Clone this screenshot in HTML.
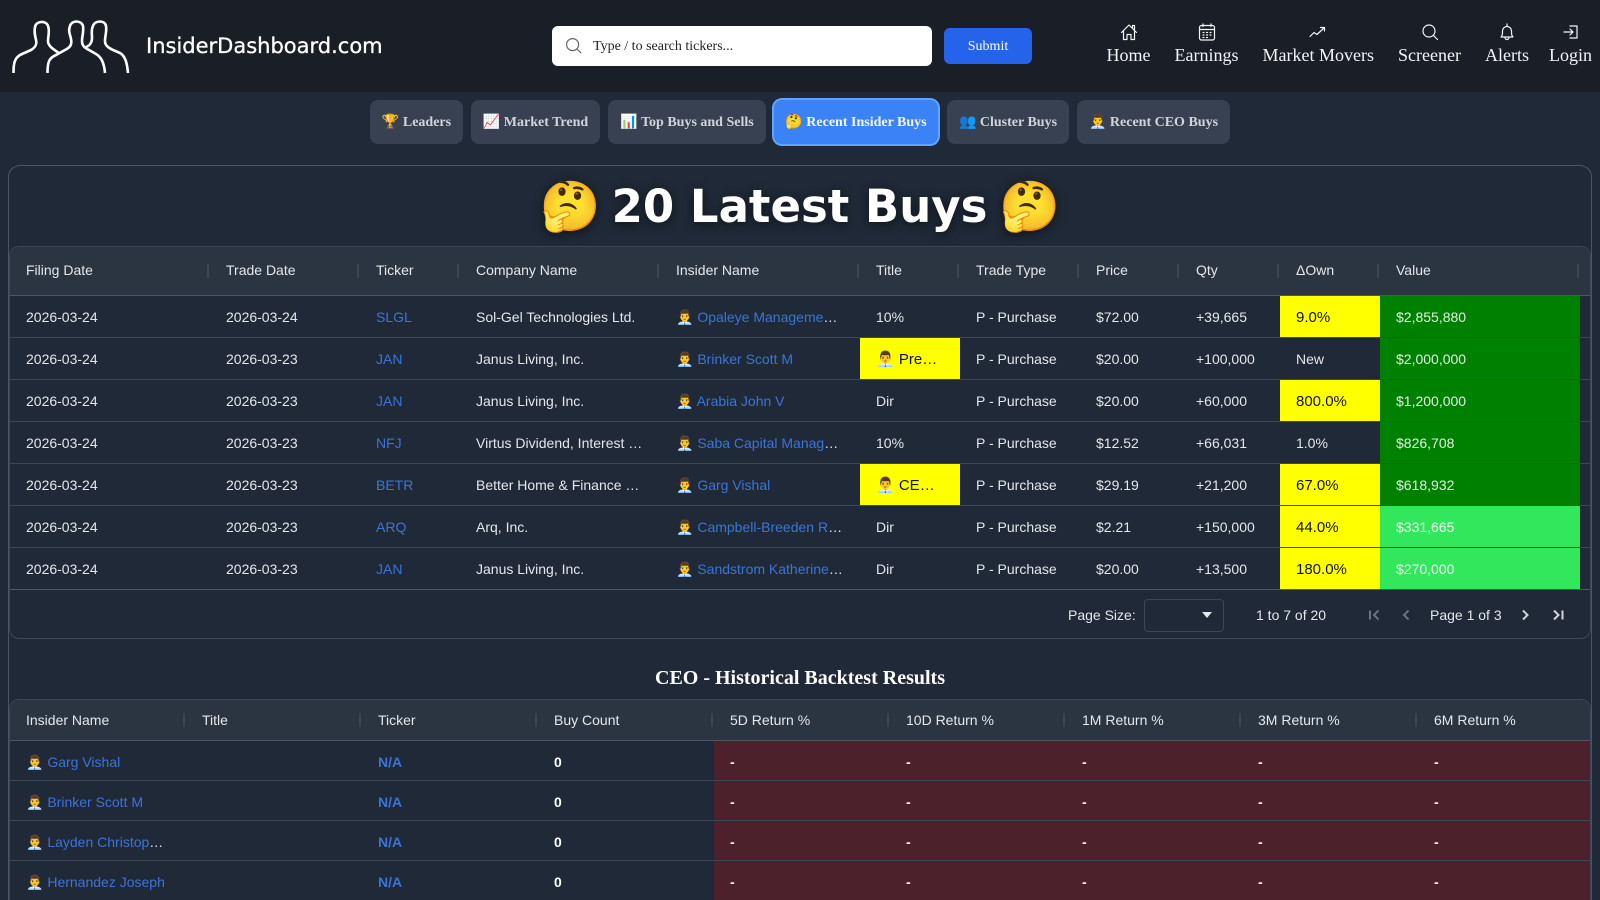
<!DOCTYPE html>
<html><head><meta charset="utf-8"><title>InsiderDashboard</title>
<style>
*{box-sizing:border-box}
html,body{margin:0;padding:0;width:1600px;height:900px;overflow:hidden;background:#1f2937}
body{position:relative;font-family:"Liberation Sans",sans-serif;font-size:14px;color:#e5e7eb}
.abs{position:absolute}
#hdr{left:0;top:0;width:1600px;height:92px;background:#1a1e27}
.brand{left:146px;top:30px;font-family:"DejaVu Sans",sans-serif;font-size:21px;line-height:32px;color:#fff;white-space:nowrap;-webkit-text-stroke:.3px #fff}
.search{left:552px;top:26px;width:380px;height:40px;background:#fff;border-radius:6px;font-family:"Liberation Serif",serif;font-size:14px;color:#222;line-height:42px;padding-left:41px}
.submit{left:944px;top:28px;width:88px;height:36px;background:#2563eb;border-radius:6px;color:#fff;font-family:"Liberation Serif",serif;font-size:14px;line-height:38px;text-align:center}
.nav{top:22px;height:50px;font-family:"Liberation Serif",serif;font-size:18px;color:#f3f4f6;text-align:center;white-space:nowrap}
.nav svg{display:block;margin:0 auto;width:20px;height:20px;fill:none;stroke:#f3f4f6;stroke-width:1.2;stroke-linecap:round;stroke-linejoin:round}
.nav span{display:block;line-height:24px;margin-top:1px}
.tab{top:100px;height:44px;background:#374151;border-radius:8px;font-family:"Liberation Serif",serif;font-weight:700;font-size:14px;line-height:45px;text-align:center;color:#d1d5db;white-space:nowrap}
.tab.on{background:#3b82f6;color:#f3f6fb;box-shadow:0 0 0 2px #60a5fa}
.card{left:8px;top:165px;width:1584px;height:735px;border:1px solid #4b5563;border-bottom:0;border-radius:12px 12px 0 0}
.title{left:0;top:172px;width:1600px;text-align:center;font-family:"DejaVu Sans",sans-serif;font-weight:700;font-size:45px;line-height:68px;color:#fff;text-shadow:0 2px 10px rgba(0,0,0,.55);white-space:nowrap}
.title span{font-size:49px;position:relative;top:1px}
.grid{border:1px solid #3d4654;border-radius:10px;overflow:hidden;background:#1f2937}
.thead{position:absolute;left:0;top:0;background:#2b3441;border-bottom:1px solid #4b5563;width:100%}
.th{position:absolute;top:0;height:100%;padding-left:16px;color:#e5e7eb;white-space:nowrap}
.th i{position:absolute;right:1px;width:2px;height:14px;background:#3d4654;top:50%;margin-top:-7px}
.row{position:absolute;left:0;width:100%;border-bottom:1px solid #3d4654}
.c{position:absolute;top:0;height:100%;padding:0 16px;white-space:nowrap;overflow:hidden;text-overflow:ellipsis;color:#e5e7eb}
.c a{color:#3b74d8;text-decoration:none}
.y{background:#ff0;color:#111;font-size:15px;line-height:44px}
.g{background:#008000;color:#dff0df}
.lg{background:#33e75c;color:#f2fff4}
.r{background:#4c212c;color:#fff;font-weight:700}
.b{font-weight:700;color:#fff}
.bl{font-weight:700;color:#3b74d8}
</style></head><body>
<div id="hdr" class="abs"></div>
<svg class="abs" style="left:0;top:0" width="140" height="90" fill="none" stroke="#fff" stroke-width="2.6" stroke-linecap="butt" stroke-linejoin="round">
<path d="M13.500 73C13.500 62 15 57 22 54L31 50C36 47 37 44 36 40C35 35 34 32 35 27C36 21 46 20 48 26C50 31 48 36 48 41C48 46 53 49 59 53"/>
<path d="M47.500 73C47.500 62 49 58 56 55L65 50C71 47 72 44 71 39C70 34 68 31 70 26C72 20 81 20 83 26C84 31 82 36 82 41C82 46 85 48 89 50L96 54C101 57 104 62 105 73"/>
<path d="M85 47.500C90 46 92 42 92 38C92 33 91 30 93 26C95 20 105 20 106 26C107 31 105 36 105 41C105 46 109 48 113 50L120 53C125 56 127 62 128 73"/>
</svg>
<div class="abs brand">InsiderDashboard.com</div>
<div class="abs search">Type / to search tickers...</div>
<svg class="abs" style="left:564px;top:36px" width="20" height="20" fill="none" stroke="#666" stroke-width="1.2" stroke-linecap="round"><circle cx="8.600" cy="8.600" r="6"/><path d="M13 13l4 4"/></svg>
<div class="abs submit">Submit</div>

<div class="abs nav" style="left:1106px;width:45px"><svg viewBox="0 0 20 20"><path d="M2.500 10.500L10 3l7.500 7.500M4.500 9v8.500h3.500v-5h4v5h3.500V9M13.500 6V3.500h2V8"/></svg><span>Home</span></div>
<div class="abs nav" style="left:1174px;width:65px"><svg viewBox="0 0 20 20"><rect x="2.500" y="3.500" width="15" height="14.500" rx="2"/><path d="M2.500 7.500h15M6 2v2.500M14 2v2.500M6 10.500h1M9.500 10.500h1M13 10.500h1M6 13h1M9.500 13h1M13 13h1M6 15.500h1M9.500 15.500h1"/></svg><span>Earnings</span></div>
<div class="abs nav" style="left:1262.500px;width:111px"><svg viewBox="0 0 20 20"><path d="M2 14.500l4-4 3 2 7-6.500M12.500 5.500h4v3.500"/></svg><span>Market Movers</span></div>
<div class="abs nav" style="left:1398px;width:63px"><svg viewBox="0 0 20 20"><circle cx="9" cy="9" r="6"/><path d="M13.500 13.500l4 4"/></svg><span>Screener</span></div>
<div class="abs nav" style="left:1485px;width:44px"><svg viewBox="0 0 20 20"><path d="M4 15c1.500-1.500 1.500-3 1.500-6a4.500 4.500 0 0 1 9 0c0 3 0 4.500 1.500 6zM8 15.500a2 2 0 0 0 4 0M10 2v2.500"/></svg><span>Alerts</span></div>
<div class="abs nav" style="left:1549px;width:43px"><svg viewBox="0 0 20 20" style="margin-left:12px"><path d="M9 4h7v12H9M3 10h9M9 7l3 3-3 3"/></svg><span>Login</span></div>

<div class="abs tab" style="left:370px;width:93px">🏆 Leaders</div>
<div class="abs tab" style="left:471px;width:129px">📈 Market Trend</div>
<div class="abs tab" style="left:608px;width:158px">📊 Top Buys and Sells</div>
<div class="abs tab on" style="left:774px;width:164px">🤔 Recent Insider Buys</div>
<div class="abs tab" style="left:947px;width:122px">👥 Cluster Buys</div>
<div class="abs tab" style="left:1077px;width:153px">👨‍💼 Recent CEO Buys</div>

<div class="abs card"></div>
<div class="abs title"><span style="margin-right:-5px">🤔</span> 20 Latest Buys <span style="margin-left:-4px">🤔</span></div>

<div class="abs grid" style="left:9px;top:246px;width:1582px;height:393px">
 <div class="thead" style="height:49px;line-height:47px">
  <div class="th" style="left:0;width:200px">Filing Date<i></i></div>
  <div class="th" style="left:200px;width:150px">Trade Date<i></i></div>
  <div class="th" style="left:350px;width:100px">Ticker<i></i></div>
  <div class="th" style="left:450px;width:200px">Company Name<i></i></div>
  <div class="th" style="left:650px;width:200px">Insider Name<i></i></div>
  <div class="th" style="left:850px;width:100px">Title<i></i></div>
  <div class="th" style="left:950px;width:120px">Trade Type<i></i></div>
  <div class="th" style="left:1070px;width:100px">Price<i></i></div>
  <div class="th" style="left:1170px;width:100px">Qty<i></i></div>
  <div class="th" style="left:1270px;width:100px">ΔOwn<i></i></div>
  <div class="th" style="left:1370px;width:200px">Value<i></i></div>
 </div>
 <div class="row" style="top:49px;height:42px;line-height:43px"><div class="c" style="left:0;width:200px">2026-03-24</div><div class="c" style="left:200px;width:150px">2026-03-24</div><div class="c" style="left:350px;width:100px"><a>SLGL</a></div><div class="c" style="left:450px;width:200px">Sol-Gel Technologies Ltd.</div><div class="c" style="left:650px;width:200px">👨‍💼 <a>Opaleye Management Inc.</a></div><div class="c" style="left:850px;width:100px">10%</div><div class="c" style="left:950px;width:120px">P - Purchase</div><div class="c" style="left:1070px;width:100px">$72.00</div><div class="c" style="left:1170px;width:100px">+39,665</div><div class="c y" style="left:1270px;width:100px">9.0%</div><div class="c g" style="left:1370px;width:200px">$2,855,880</div></div>
 <div class="row" style="top:91px;height:42px;line-height:43px"><div class="c" style="left:0;width:200px">2026-03-24</div><div class="c" style="left:200px;width:150px">2026-03-23</div><div class="c" style="left:350px;width:100px"><a>JAN</a></div><div class="c" style="left:450px;width:200px">Janus Living, Inc.</div><div class="c" style="left:650px;width:200px">👨‍💼 <a>Brinker Scott M</a></div><div class="c y" style="left:850px;width:100px">👨‍💼 President</div><div class="c" style="left:950px;width:120px">P - Purchase</div><div class="c" style="left:1070px;width:100px">$20.00</div><div class="c" style="left:1170px;width:100px">+100,000</div><div class="c" style="left:1270px;width:100px">New</div><div class="c g" style="left:1370px;width:200px">$2,000,000</div></div>
 <div class="row" style="top:133px;height:42px;line-height:43px"><div class="c" style="left:0;width:200px">2026-03-24</div><div class="c" style="left:200px;width:150px">2026-03-23</div><div class="c" style="left:350px;width:100px"><a>JAN</a></div><div class="c" style="left:450px;width:200px">Janus Living, Inc.</div><div class="c" style="left:650px;width:200px">👨‍💼 <a>Arabia John V</a></div><div class="c" style="left:850px;width:100px">Dir</div><div class="c" style="left:950px;width:120px">P - Purchase</div><div class="c" style="left:1070px;width:100px">$20.00</div><div class="c" style="left:1170px;width:100px">+60,000</div><div class="c y" style="left:1270px;width:100px">800.0%</div><div class="c g" style="left:1370px;width:200px">$1,200,000</div></div>
 <div class="row" style="top:175px;height:42px;line-height:43px"><div class="c" style="left:0;width:200px">2026-03-24</div><div class="c" style="left:200px;width:150px">2026-03-23</div><div class="c" style="left:350px;width:100px"><a>NFJ</a></div><div class="c" style="left:450px;width:200px">Virtus Dividend, Interest &amp; Premium Strategy Fund</div><div class="c" style="left:650px;width:200px">👨‍💼 <a>Saba Capital Management</a></div><div class="c" style="left:850px;width:100px">10%</div><div class="c" style="left:950px;width:120px">P - Purchase</div><div class="c" style="left:1070px;width:100px">$12.52</div><div class="c" style="left:1170px;width:100px">+66,031</div><div class="c" style="left:1270px;width:100px">1.0%</div><div class="c g" style="left:1370px;width:200px">$826,708</div></div>
 <div class="row" style="top:217px;height:42px;line-height:43px"><div class="c" style="left:0;width:200px">2026-03-24</div><div class="c" style="left:200px;width:150px">2026-03-23</div><div class="c" style="left:350px;width:100px"><a>BETR</a></div><div class="c" style="left:450px;width:200px">Better Home &amp; Finance Holding Co</div><div class="c" style="left:650px;width:200px">👨‍💼 <a>Garg Vishal</a></div><div class="c y" style="left:850px;width:100px">👨‍💼 CEO and Director</div><div class="c" style="left:950px;width:120px">P - Purchase</div><div class="c" style="left:1070px;width:100px">$29.19</div><div class="c" style="left:1170px;width:100px">+21,200</div><div class="c y" style="left:1270px;width:100px">67.0%</div><div class="c g" style="left:1370px;width:200px">$618,932</div></div>
 <div class="row" style="top:259px;height:42px;line-height:43px"><div class="c" style="left:0;width:200px">2026-03-24</div><div class="c" style="left:200px;width:150px">2026-03-23</div><div class="c" style="left:350px;width:100px"><a>ARQ</a></div><div class="c" style="left:450px;width:200px">Arq, Inc.</div><div class="c" style="left:650px;width:200px">👨‍💼 <a>Campbell-Breeden Richard</a></div><div class="c" style="left:850px;width:100px">Dir</div><div class="c" style="left:950px;width:120px">P - Purchase</div><div class="c" style="left:1070px;width:100px">$2.21</div><div class="c" style="left:1170px;width:100px">+150,000</div><div class="c y" style="left:1270px;width:100px">44.0%</div><div class="c lg" style="left:1370px;width:200px">$331,665</div></div>
 <div class="row" style="top:301px;height:42px;line-height:43px;border-bottom-color:#4b5563"><div class="c" style="left:0;width:200px">2026-03-24</div><div class="c" style="left:200px;width:150px">2026-03-23</div><div class="c" style="left:350px;width:100px"><a>JAN</a></div><div class="c" style="left:450px;width:200px">Janus Living, Inc.</div><div class="c" style="left:650px;width:200px">👨‍💼 <a>Sandstrom Katherine Elizabeth</a></div><div class="c" style="left:850px;width:100px">Dir</div><div class="c" style="left:950px;width:120px">P - Purchase</div><div class="c" style="left:1070px;width:100px">$20.00</div><div class="c" style="left:1170px;width:100px">+13,500</div><div class="c y" style="left:1270px;width:100px">180.0%</div><div class="c lg" style="left:1370px;width:200px">$270,000</div></div>
</div>

<div class="abs" style="left:1068px;top:606px;line-height:18px;color:#e5e7eb">Page Size:</div>
<div class="abs" style="left:1144px;top:599px;width:80px;height:33px;border:1px solid #3d4654;border-radius:4px"></div>
<div class="abs" style="left:1202px;top:612px;width:0;height:0;border-left:5px solid transparent;border-right:5px solid transparent;border-top:6px solid #e5e7eb"></div>
<div class="abs" style="left:1256px;top:606px;line-height:18px">1 to 7 of 20</div>
<div class="abs" style="left:1430px;top:606px;line-height:18px">Page 1 of 3</div>
<svg class="abs" style="left:1366px;top:607px" width="200" height="16" fill="none" stroke-width="2">
<path d="M4 3.500v9M12.500 3.500l-4.500 4.500 4.500 4.500" stroke="#6b7280"/>
<path d="M42.500 3.500l-4.500 4.500 4.500 4.500" stroke="#6b7280"/>
<path d="M157 3.500l4.500 4.500-4.500 4.500" stroke="#d1d5db"/>
<path d="M188 3.500l4.500 4.500-4.500 4.500M196.500 3.500v9" stroke="#d1d5db"/>
</svg>

<div class="abs" style="left:0;top:666px;width:1600px;text-align:center;font-family:'Liberation Serif',serif;font-weight:700;font-size:20px;line-height:24px;color:#fff">CEO - Historical Backtest Results</div>

<div class="abs grid" style="left:9px;top:699px;width:1582px;height:201px;border-bottom:0;border-radius:10px 10px 0 0">
 <div class="thead" style="height:41px;line-height:40px">
  <div class="th" style="left:0;width:176px">Insider Name<i></i></div>
  <div class="th" style="left:176px;width:176px">Title<i></i></div>
  <div class="th" style="left:352px;width:176px">Ticker<i></i></div>
  <div class="th" style="left:528px;width:176px">Buy Count<i></i></div>
  <div class="th" style="left:704px;width:176px">5D Return %<i></i></div>
  <div class="th" style="left:880px;width:176px">10D Return %<i></i></div>
  <div class="th" style="left:1056px;width:176px">1M Return %<i></i></div>
  <div class="th" style="left:1232px;width:176px">3M Return %<i></i></div>
  <div class="th" style="left:1408px;width:176px">6M Return %<i></i></div>
 </div>
 <div class="row" style="top:41px;height:40px;line-height:42px"><div class="c" style="left:0;width:176px">👨‍💼 <a>Garg Vishal</a></div><div class="c bl" style="left:352px;width:176px">N/A</div><div class="c b" style="left:528px;width:176px">0</div><div class="c r" style="left:704px;width:176px">-</div><div class="c r" style="left:880px;width:176px">-</div><div class="c r" style="left:1056px;width:176px">-</div><div class="c r" style="left:1232px;width:176px">-</div><div class="c r" style="left:1408px;width:176px">-</div></div>
 <div class="row" style="top:81px;height:40px;line-height:42px"><div class="c" style="left:0;width:176px">👨‍💼 <a>Brinker Scott M</a></div><div class="c bl" style="left:352px;width:176px">N/A</div><div class="c b" style="left:528px;width:176px">0</div><div class="c r" style="left:704px;width:176px">-</div><div class="c r" style="left:880px;width:176px">-</div><div class="c r" style="left:1056px;width:176px">-</div><div class="c r" style="left:1232px;width:176px">-</div><div class="c r" style="left:1408px;width:176px">-</div></div>
 <div class="row" style="top:121px;height:40px;line-height:42px"><div class="c" style="left:0;width:176px;padding-right:22px">👨‍💼 <a>Layden Christopher</a></div><div class="c bl" style="left:352px;width:176px">N/A</div><div class="c b" style="left:528px;width:176px">0</div><div class="c r" style="left:704px;width:176px">-</div><div class="c r" style="left:880px;width:176px">-</div><div class="c r" style="left:1056px;width:176px">-</div><div class="c r" style="left:1232px;width:176px">-</div><div class="c r" style="left:1408px;width:176px">-</div></div>
 <div class="row" style="top:161px;height:40px;line-height:42px"><div class="c" style="left:0;width:176px">👨‍💼 <a>Hernandez Joseph</a></div><div class="c bl" style="left:352px;width:176px">N/A</div><div class="c b" style="left:528px;width:176px">0</div><div class="c r" style="left:704px;width:176px">-</div><div class="c r" style="left:880px;width:176px">-</div><div class="c r" style="left:1056px;width:176px">-</div><div class="c r" style="left:1232px;width:176px">-</div><div class="c r" style="left:1408px;width:176px">-</div></div>
</div>
</body></html>
